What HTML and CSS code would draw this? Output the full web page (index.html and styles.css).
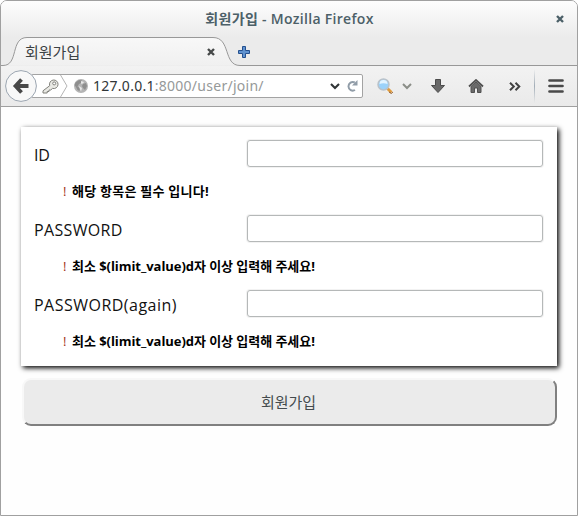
FILE: index.html
```html
<!DOCTYPE html>
<html lang="ko">
<head>
<meta charset="utf-8">
<title>회원가입</title>
<link rel="stylesheet" href="styles.css">
</head>
<body>
<div class="window">
  <header class="chrome">
    <div class="titlebar">
      <span class="window-title">회원가입 - Mozilla Firefox</span>
      <svg class="window-close" width="8" height="8" viewBox="0 0 8 8"><path d="M1 1l6 6M7 1l-6 6" stroke="#4c6068" stroke-width="2.4"/></svg>
    </div>
    <div class="tabs">
      <svg class="tab-shape" width="576" height="29" viewBox="0 0 576 29">
        <defs><linearGradient id="tab" x2="0" y2="1"><stop stop-color="#f8f8f8"/><stop offset="1" stop-color="#f0f0f0"/></linearGradient></defs>
        <path d="M0 28.500H2C18 28.500 9 .5 26 .5H212C230 .5 222 28.500 239 28.500H576" fill="url(#tab)" stroke="#989898"/>
      </svg>
      <span class="tab-title">회원가입</span>
      <svg class="tab-close" width="8" height="8" viewBox="0 0 8 8"><path d="M1 1l6 6M7 1l-6 6" stroke="#464949" stroke-width="2.4"/></svg>
      <svg class="tab-new" width="12" height="12" viewBox="0 0 12 12"><path d="M4.500.5h3v4h4v3h-4v4h-3v-4h-4v-3h4z" fill="#5f92d0" stroke="#24508f"/></svg>
    </div>
    <div class="toolbar">
      <svg class="back" width="32" height="32" viewBox="0 0 32 32"><circle cx="16" cy="16" r="15.400" fill="#f8f8f8" stroke="#9ba5b0"/><path d="M16.500 9.500L10.500 16l6 6.500M11 16h12.500" fill="none" stroke="#484848" stroke-width="3.800"/></svg>
      <div class="address">
        <svg class="key" width="17" height="15" viewBox="0 0 17 15"><path d="M7.700 6.700a4.300 4.300 0 1 1 2.800 2.700L8.800 11H7v1.500H5.200V14H1v-2.200z" fill="#e9e9e4" stroke="#80807b"/><circle cx="12.200" cy="4.400" r="1.500" fill="#fff" stroke="#80807b"/></svg>
        <svg class="divider" width="8" height="22" viewBox="0 0 8 22"><path d="M.5 0L7 11L.5 22" fill="none" stroke="#b4b4b4"/></svg>
        <svg class="globe" width="14" height="14" viewBox="0 0 14 14"><circle cx="7" cy="7" r="7" fill="#b4b4b4"/><path d="M1.500 3.500L5 1l3 .5L7 4 5 5 3.500 7.500 6 9l-.5 3-2-1L2 8 .5 6zM9 5l3-1 1 3-2 4-2-2-1-2z" fill="#8e8e8e"/><path d="M7 2l3 1-1 1.500-2 .3zM5 7l3 2-1 3.500L5.500 9z" fill="#e7e7e7"/></svg>
        <span class="url"><b>127.0.0.1</b>:8000/user/join/</span>
        <svg class="history" width="10" height="7" viewBox="0 0 10 7"><path d="M1 1l4 4 4-4" fill="none" stroke="#303536" stroke-width="2.100"/></svg>
        <svg class="reload" width="12" height="12" viewBox="0 0 12 12"><path d="M8.800 2.500A4.300 4.300 0 1 0 9 10" fill="none" stroke="#919da8" stroke-width="2"/><path d="M11.500 0v5.500H6z" fill="#919da8"/></svg>
      </div>
      <svg class="search" width="16" height="16" viewBox="0 0 16 16"><path d="M10.500 10.500l4 4" stroke="#df9b3d" stroke-width="3"/><path d="M12 14l2.500 1.500L15.800 14" fill="none" stroke="#946238"/><circle cx="6.500" cy="6.500" r="5.500" fill="#9bd2fa" stroke="#b9c2ca" stroke-width="1.500"/><path d="M2.500 6a4 4 0 0 1 8 0q-4-1.500-8 0" fill="#e3f4ff"/></svg>
      <svg class="engine" width="10" height="7" viewBox="0 0 10 7"><path d="M1 1l4 4 4-4" fill="none" stroke="#8b8e88" stroke-width="2"/></svg>
      <svg class="download" width="14" height="14" viewBox="0 0 14 14"><path d="M4.500.5h5v6h4L7 13.500.5 6.500h4z" fill="#696969" stroke="#4b4b4b"/></svg>
      <svg class="home" width="16" height="14" viewBox="0 0 16 14"><path d="M3 7.500L8 3l5 4.500v6H9.500V9h-3v4.500H3z" fill="#6a6a6a" stroke="#505050"/><path d="M1 7.500L8 1l7 6.500" fill="none" stroke="#505050" stroke-width="1.800"/></svg>
      <svg class="more" width="12" height="9" viewBox="0 0 12 9"><path d="M1 .7l3.800 3.800L1 8.300M6.500.7l3.800 3.800-3.800 3.800" fill="none" stroke="#424242" stroke-width="2"/></svg>
      <span class="separator"></span>
      <svg class="menu" width="16" height="14" viewBox="0 0 16 14"><path d="M1.500 1.500h13M1.500 7h13M1.500 12.500h13" stroke="#494949" stroke-width="2.700" stroke-linecap="round"/></svg>
    </div>
  </header>
  <main class="page">
    <form>
      <div class="card">
        <div class="field"><label for="id">ID</label><input id="id" type="text"></div>
        <p class="error"><i>!</i><strong class="required">해당 항목은 필수 입니다!</strong></p>
        <div class="field"><label class="password" for="pw">PASSWORD</label><input id="pw" type="password"></div>
        <p class="error"><i>!</i><strong>최소 $(limit_value)d자 이상 입력해 주세요!</strong></p>
        <div class="field"><label class="again" for="pw2">PASSWORD(again)</label><input id="pw2" type="password"></div>
        <p class="error"><i>!</i><strong>최소 $(limit_value)d자 이상 입력해 주세요!</strong></p>
      </div>
      <button class="submit" type="button">회원가입</button>
    </form>
  </main>
</div>
</body>
</html>
```
FILE: styles.css
```css
* { box-sizing: border-box; }
body { margin: 0; background: #fff; font-family: "Open Sans", "Noto Sans CJK KR", sans-serif; }
svg { display: block; flex: none; }
.window { width: 578px; height: 516px; border: 1px solid #a0a0a0; border-radius: 7px 7px 0 0; overflow: hidden; background: #fefefe; }
.chrome { height: 106px; border-bottom: 1px solid #a0a0a0; background: #ebebeb; }
.titlebar { height: 36px; display: flex; align-items: center; padding-right: 14px; background: linear-gradient(#fdfdfd, #ebebeb); }
.window-title { flex: 1; padding-left: 22px; text-align: center; font-size: 14px; line-height: 18px; font-weight: 600; letter-spacing: .3px; color: #4c6068; white-space: nowrap; }
.window-close { margin-right: -1px; }
.tabs { position: relative; height: 29px; display: flex; align-items: center; }
.tab-shape { position: absolute; inset: 0; }
.tab-title { position: relative; width: 181px; padding-left: 24px; font-size: 15px; line-height: 20px; color: #3c4244; }
.tab-close { position: relative; margin-left: 25px; }
.tab-new { margin-left: 23px; }
.toolbar { height: 40px; display: flex; align-items: center; padding-left: 4px; background: linear-gradient(#f2f2f2, #eaeaea); }
.back { position: relative; z-index: 1; }
.address { width: 332px; height: 24px; margin-left: -6px; padding-left: 10px; display: flex; align-items: center; border: 1px solid #a3a3a3; border-radius: 2px; background: #fff; }
.divider { margin-left: 1px; }
.globe { margin-left: 6px; }
.url { width: 237px; margin-left: 5px; font: 14px/20px "Noto Sans", sans-serif; letter-spacing: .27px; color: #969999; white-space: nowrap; }
.url b { font-weight: 400; color: #303638; }
.reload { margin-left: 6px; }
.search { margin-left: 14px; }
.engine { margin-left: 9px; }
.download { margin-left: 19px; }
.home { margin-left: 23px; }
.more { margin-left: 25px; }
.separator { width: 1px; height: 34px; margin-left: 13px; background: linear-gradient(transparent, #a2adb7, transparent); }
.menu { margin-left: 13px; }
.page { padding: 20px 20px 0; }
.card { height: 239px; padding: 13px; background: #fff; box-shadow: 2px 2px 5px #000; }
.field { display: flex; justify-content: space-between; height: 27px; }
.field label { font-size: 16px; line-height: 31px; color: #111; white-space: nowrap; letter-spacing: -.3px; }
.field .password { letter-spacing: .35px; }
.field .again { letter-spacing: .48px; }
.field input { width: 296px; height: 27px; margin: 0 1px 0 0; border: 1px solid #b5b8b8; border-radius: 3px; background: #fff; outline: 0; box-shadow: 0 0 0 1px #f2f2f2; }
.error { display: flex; height: 48px; margin: 0; padding: 14px 0 0 29px; font-size: 13px; line-height: 20px; white-space: nowrap; }
.error i { width: 9px; color: #a33215; font-style: normal; }
.error strong { font-weight: 700; color: #000; letter-spacing: -.05px; }
.error .required { letter-spacing: .25px; }
.submit { display: block; width: 535px; height: 48px; margin: 12px 0 0 1px; padding: 0 2px 0 0; border: 2px solid; border-color: #f8f8f8 #808080 #808080 #f8f8f8; border-radius: 9px; background: #ebebeb; color: #444b4e; font: 15px/20px "Noto Sans CJK KR", sans-serif; }
```
